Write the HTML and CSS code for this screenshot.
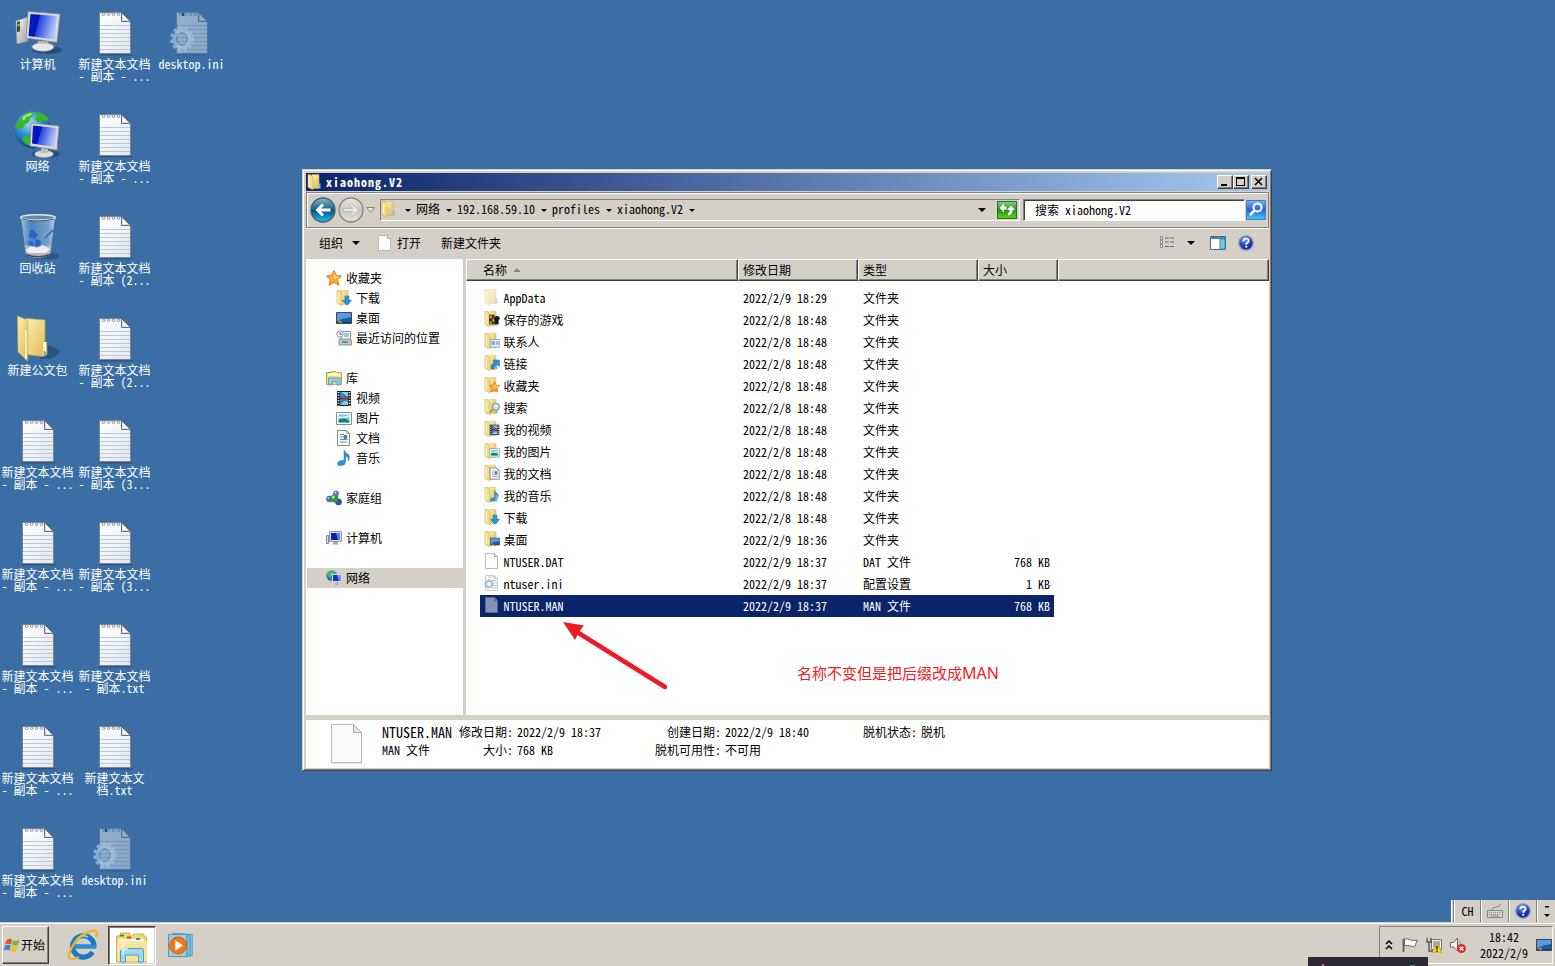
FILE: index.html
```
<!DOCTYPE html>
<html lang="zh-CN">
<head>
<meta charset="utf-8">
<title>xiaohong.V2</title>
<link rel="stylesheet" href="styles.css">
</head>
<body>
<svg width="0" height="0" class="defs">
<defs>
<linearGradient id="gPaper" x1="0" y1="0" x2="1" y2="1"><stop offset="0" stop-color="#fff"/><stop offset="1" stop-color="#e4e7ee"/></linearGradient>
<linearGradient id="gScreen" x1="0" y1="0" x2="1" y2=".25"><stop offset="0" stop-color="#0a1fae"/><stop offset=".38" stop-color="#0512c0"/><stop offset=".42" stop-color="#2745e0"/><stop offset="1" stop-color="#b4c6f8"/></linearGradient>
<linearGradient id="gFold" x1="0" y1="0" x2="1" y2="1"><stop offset="0" stop-color="#fbf0b4"/><stop offset="1" stop-color="#dfb94e"/></linearGradient>
<linearGradient id="gSilver" x1="0" y1="0" x2="1" y2="1"><stop offset="0" stop-color="#fafafa"/><stop offset="1" stop-color="#9c9c9c"/></linearGradient>
<radialGradient id="gGlobe" cx=".4" cy=".3" r=".7"><stop offset="0" stop-color="#9fe0ff"/><stop offset=".5" stop-color="#2b8fd0"/><stop offset="1" stop-color="#123f87"/></radialGradient>
<linearGradient id="gBack" x1="0" y1="0" x2="0" y2="1"><stop offset="0" stop-color="#8bb6ca"/><stop offset=".45" stop-color="#1b6795"/><stop offset=".5" stop-color="#074e80"/><stop offset="1" stop-color="#18c2f2"/></linearGradient>
<linearGradient id="gFwd" x1="0" y1="0" x2="0" y2="1"><stop offset="0" stop-color="#e8e7e3"/><stop offset=".5" stop-color="#c8c6bf"/><stop offset="1" stop-color="#e4e2dd"/></linearGradient>
<linearGradient id="gBlue" x1="0" y1="0" x2="0" y2="1"><stop offset="0" stop-color="#79b3f4"/><stop offset=".5" stop-color="#2b62dc"/><stop offset="1" stop-color="#49cdf8"/></linearGradient>
<linearGradient id="gGreen" x1="0" y1="0" x2="0" y2="1"><stop offset="0" stop-color="#8ccf82"/><stop offset=".5" stop-color="#23941f"/><stop offset="1" stop-color="#5fd31b"/></linearGradient>
<linearGradient id="gBin" x1="0" y1="0" x2="1" y2="0"><stop offset="0" stop-color="#c7ddf1" stop-opacity=".75"/><stop offset=".3" stop-color="#5e97d0" stop-opacity=".5"/><stop offset=".8" stop-color="#9cc5ea" stop-opacity=".6"/><stop offset="1" stop-color="#d6e8f8" stop-opacity=".8"/></linearGradient>
<radialGradient id="gOrb" cx=".4" cy=".25" r=".75"><stop offset="0" stop-color="#7f9cf4"/><stop offset=".6" stop-color="#1b3fc0"/><stop offset="1" stop-color="#0a1f86"/></radialGradient>

<symbol id="doc48" viewBox="0 0 48 48"><path d="M8 46h34v1.500H8z" fill="#1d3d66" opacity=".5"/><path d="M8.500 4.500h22l9 9v32h-31z" fill="url(#gPaper)" stroke="#7c838e"/><path d="M9 17.500h30M9 21.500h30M9 25.500h30M9 29.500h30M9 33.500h30M9 37.500h30M9 41.500h30" stroke="#b5cad9"/><path d="M30.500 4.500v9h9z" fill="#d8dce4" stroke="#6a707a"/><path d="M32 7v5h5" fill="#fff"/><g fill="none" stroke="#8a8f98"><circle cx="12.500" cy="6.200" r="1.300"/><circle cx="17.500" cy="6.200" r="1.300"/><circle cx="22.500" cy="6.200" r="1.300"/><circle cx="27.500" cy="6.200" r="1.300"/></g></symbol>
<symbol id="gear" viewBox="0 0 26 28"><ellipse cx="13" cy="14" rx="7.500" ry="8.500" fill="none" stroke="#9cc3e0" stroke-width="4"/><ellipse cx="13" cy="14" rx="10.500" ry="11.700" fill="none" stroke="#9cc3e0" stroke-width="2.600" stroke-dasharray="3.600 2.500"/><ellipse cx="13" cy="14" rx="5.200" ry="6.200" fill="none" stroke="#4f7fae"/></symbol>
<symbol id="ini48" viewBox="0 0 48 48"><g opacity=".45"><use href="#doc48" width="48" height="48"/></g><g opacity=".75"><use href="#gear" x="1" y="17" width="26" height="28"/></g><rect x="14" y="5" width="2" height="3" fill="#164f8e"/></symbol>
<symbol id="pc48" viewBox="0 0 48 48"><ellipse cx="33" cy="42" rx="15" ry="4" fill="#173b66" opacity=".6"/><path d="M2 13l12-4v24L3 36z" fill="url(#gSilver)" stroke="#999" stroke-width=".6"/><path d="M3 14l3-.8v10l-3 1z" fill="#444"/><circle cx="4.500" cy="17" r="1.200" fill="#4cf32c"/><path d="M24 33h10l1 6H23z" fill="#b8b8b8"/><ellipse cx="29" cy="39" rx="11" ry="4.200" fill="#e8e8e8" stroke="#969696" stroke-width=".6"/><path d="M14 3.500L46 6l-3 28.500L12 30z" fill="#dad9d5" stroke="#888" stroke-width=".8"/><path d="M16.500 6L43 8l-2.500 23.500L14.500 28z" fill="url(#gScreen)"/></symbol>
<symbol id="net48" viewBox="0 0 48 48"><ellipse cx="32" cy="44" rx="14" ry="4" fill="#173b66" opacity=".6"/><circle cx="19" cy="20" r="18.500" fill="url(#gGlobe)"/><path d="M6 9q7-8 14-7 0 4-4 6 1 5-5 6-1 6-6 5l-4-2q1-4 5-8zM24 2q9 2 11 9l-6-1-4 3-4-3zM8 27q6-3 9 2l1 7q-9-1-10-9z" fill="#38b52b"/><path d="M8 8q5-5 11-5l-3 3-4 1-2 4z" fill="#a8ef6b"/><ellipse cx="30" cy="44" rx="9.500" ry="3.600" fill="#ddd" stroke="#999" stroke-width=".6"/><path d="M27 38h7v5h-7z" fill="#bbb"/><path d="M17 13l28 3-2 24-27-4z" fill="#d9d9d5" stroke="#888" stroke-width=".8"/><path d="M19 15.500l23.500 2.500-1.700 19L18 33.500z" fill="url(#gScreen)"/></symbol>
<symbol id="bin48" viewBox="0 0 48 48"><ellipse cx="32" cy="44" rx="13" ry="3.500" fill="#173b66" opacity=".5"/><path d="M7 5h34l-5 38q-12 6-24 0z" fill="url(#gBin)"/><path d="M10.500 33q13 3 27 0l-1.500 10q-12 6-24 0z" fill="#b4b9bf"/><path d="M12 42.500q12 4.500 24 0" stroke="#4b4c4e" stroke-width="1.600" fill="none"/><path d="M12 38l5-4 6 2 6-3 7 4-4 4H14z" fill="#efefef"/><path d="M16 19l3-1 5 5-3 4-3-2-3 1zM22 27l5 2-1 5-5 1zM14 29l5 1 1 4-5-1z" fill="#1d5dce" opacity=".85"/><path d="M31 26l8-8" stroke="#286bb3" stroke-width="1.600"/><ellipse cx="24" cy="5.500" rx="17.300" ry="2.800" fill="#618bac" stroke="#e2e5e6" stroke-width="1.600"/><path d="M8 7q16 4 32 0" fill="none" stroke="#4b5258"/></symbol>
<symbol id="fold48" viewBox="0 0 48 48"><path d="M26 45q18 1 20-9L32 30z" fill="#173b66" opacity=".5"/><path d="M12 4.500l19 1.500v22l2 .500v12l-4 2-17-2z" fill="url(#gFold)" stroke="#c5a344" stroke-width=".6"/><path d="M3.500 2l10 4 .5 5-.5 36L4 38z" fill="url(#gFold)" stroke="#c9a849" stroke-width=".6"/><path d="M12 16v29" stroke="#fffbe0" stroke-width="1.500"/><path d="M29.500 29l2.500-1v11l-2.500 2z" fill="#fff"/><path d="M30 36v5l2-2z" fill="#2f94f0"/></symbol>

<symbol id="folder" viewBox="0 0 16 16"><path d="M5 .500h7v14H5z" fill="url(#gFold)" stroke="#d5b45c" stroke-width=".5"/><path d="M1 .500h2.500L6 3v12.700L1 13.500z" fill="#f2dc8a" stroke="#cfac50" stroke-width=".6"/><path d="M2.200 2v11" stroke="#fff8cf"/><path d="M12 9.500h1.500V15L12 14z" fill="#72bdf0"/></symbol>
<symbol id="page" viewBox="0 0 16 16"><path d="M1.500.500h9l3 3v12h-12z" fill="#fdfdfd" stroke="#bbb"/><path d="M10.500.500v3h3" fill="#e3e3e3" stroke="#aaa"/></symbol>
<symbol id="textpage" viewBox="0 0 16 16"><use href="#page" width="16" height="16"/><path d="M1.500.500h9l3 3v12h-12z" fill="none" stroke="#8c8c8c"/><path d="M4 4.500h4M4 7h7.500M4 9.500h7.500M4 12h7.500" stroke="#6f8bac"/><path d="M8 5h3v4H8z" fill="#278bd1"/></symbol>
<symbol id="pic" viewBox="0 0 16 16"><path d="M.5 2.500h15v12H.5z" fill="#fff" stroke="#858f99"/><path d="M2.500 4.500h11v8h-11z" fill="#73c5e8"/><path d="M2.500 10q4-4 11 1v1.500h-11z" fill="#198266"/><path d="M3 6q4 2 10-1v2q-5 2-10 1z" fill="#e2f5fc"/></symbol>
<symbol id="film" viewBox="0 0 16 16"><path d="M1 1h14v15H1z" fill="#1d2226"/><path d="M4 2h8v6H4zM4 9h8v6H4z" fill="#2c85bd"/><path d="M5 2l7 5V2zM4 15l5-5 3 2v3z" fill="#85c9eb"/><path d="M9 6l3 2-3 3-3-2z" fill="#b23b2b"/><path d="M2.500 2v14M13.500 2v14" stroke="#fff" stroke-width="1.500" stroke-dasharray="1.200 1.500"/></symbol>
<symbol id="note" viewBox="0 0 16 16"><path d="M8 0q1 3 4 4 3 3 0 7 1-4-2.500-5v6q0 3-4 3.500Q1 16 1.500 13q1-3 6.500-2.500z" fill="#2794df" stroke="#1973b6" stroke-width=".5"/></symbol>
<symbol id="down" viewBox="0 0 16 16"><path d="M5 1h6v7h4l-7 7.500L1 8h4z" fill="#2798e7" stroke="#0c65ae"/></symbol>
<symbol id="star" viewBox="0 0 16 16"><path d="M8 .5l2.300 5 5.200.5-4 3.600 1.300 5.700L8 12.200l-4.800 3.100 1.300-5.700L.5 6l5.200-.5z" fill="#ffb02e" stroke="#e66d19"/><path d="M8 2.500l1.500 4 4 .3-5.500 2z" fill="#ffe690"/></symbol>
<symbol id="screen" viewBox="0 0 16 16"><path d="M.5 2.500h15v11H.5z" fill="#175bab" stroke="#36485f"/><path d="M1 3h14v4Q7 8 1 11z" fill="#5c98dc"/><path d="M1 12.500h14" stroke="#203b5b"/><circle cx="3.500" cy="11.500" r="1.300" fill="#f5702c"/><circle cx="5" cy="12.500" r="1" fill="#61cd38"/></symbol>
<symbol id="recent" viewBox="0 0 16 16"><path d="M5.500 1.500h9v10h-9z" fill="#eef5fb" stroke="#8996a3"/><path d="M8 4h5M8 6h5" stroke="#4ea3d2"/><path d="M3 9h12l1 6H3z" fill="#bfc5ca" stroke="#8f969c"/><path d="M6 11h6v2H6z" fill="#3aa4b3"/><circle cx="4" cy="4" r="3.200" fill="#fff" stroke="#8c959c"/><path d="M4 2v2.300h2" fill="none" stroke="#667"/></symbol>
<symbol id="library" viewBox="0 0 16 16"><path d="M.5 2.500h4l1-1h4l1 1h5v12H.5z" fill="#f0d77c" stroke="#c8a74c"/><path d="M2 3h12v3H2z" fill="#fff5c8"/><path d="M2 2.500h3" stroke="#49ad38"/><path d="M2.500 15V9q0-1 1-1h9.500q1 0 1 1v6h-3v-3.500H6V15z" fill="#8bd3ef" stroke="#4797bd" stroke-width=".8"/></symbol>
<symbol id="home" viewBox="0 0 16 16"><circle cx="10" cy="3.500" r="3" fill="#5976da"/><circle cx="3.500" cy="9" r="3.300" fill="#5266c9"/><circle cx="12.500" cy="12" r="3.300" fill="#334bad"/><circle cx="8.500" cy="8.500" r="4" fill="#2e9b32"/><circle cx="7.300" cy="7" r="1.600" fill="#a1e594"/><circle cx="2.500" cy="8" r="1" fill="#cdd9ff"/><circle cx="9.500" cy="2.500" r="1" fill="#d4deff"/></symbol>
<symbol id="pc" viewBox="0 0 16 16"><path d="M.5 5.500h2v8h-2z" fill="#ddd" stroke="#888"/><path d="M3.500 1.500h12v10h-12z" fill="#ddd" stroke="#999"/><path d="M5 3h9v7H5z" fill="#0d1fb3"/><path d="M10 3h4v7h-2z" fill="#5b7cf0"/><path d="M7.500 12h4l1 2.500h-6z" fill="#aaa"/></symbol>
<symbol id="net" viewBox="0 0 16 16"><circle cx="5.500" cy="5.500" r="5.200" fill="url(#gGlobe)"/><path d="M2 3q2-3 5-2L5 4 4 7 1 6zM8 1q3 1 3 4L8 4zM3 8l3 1v2z" fill="#4abf35"/><path d="M6.500 4.500h9v7h-9z" fill="#1635be" stroke="#d7dade"/><path d="M11 5h4v6h-2z" fill="#6d90f3"/><path d="M9.500 12h3v3h-3z" fill="#aab"/></symbol>
<symbol id="card" viewBox="0 0 16 16"><path d="M.5 2.500h15v12H.5z" fill="#f1f7fb" stroke="#68849b"/><path d="M2.500 5h5v6h-5z" fill="#5fa9de"/><path d="M9 6.500h5M9 9.500h5" stroke="#5378a0" stroke-width="1.500"/></symbol>
<symbol id="link" viewBox="0 0 16 16"><path d="M2 15Q1 7 7 5L5 1h10v10l-3-3Q7 9 6 15z" fill="#2b91de" stroke="#0c66ac"/></symbol>
<symbol id="lens" viewBox="0 0 16 16"><path d="M6 9l-5 6" stroke="#c98b40" stroke-width="2.500"/><circle cx="10" cy="6" r="4.800" fill="#d6ebf5" stroke="#88a0b1" stroke-width="2"/></symbol>
<symbol id="chess" viewBox="0 0 16 16"><path d="M0 1h8v14H0z" fill="#423323"/><path d="M1 2h3v4H1zM5 7h3v4H5zM1 11h3v3H1z" fill="#c9ad60"/><path d="M10 3q5-1 6 4l-2 2v6H8V9q-2-2 2-6z" fill="#161616"/></symbol>

<symbol id="back" viewBox="0 0 26 26"><circle cx="13" cy="13" r="12" fill="url(#gBack)" stroke="#505c66" stroke-width="1.400"/><path d="M5.500 13L12 6.500l2 2-3 3h9.500v3H11l3 3-2 2z" fill="#fff"/></symbol>
<symbol id="fwd" viewBox="0 0 26 26"><circle cx="13" cy="13" r="12" fill="url(#gFwd)" stroke="#85847f" stroke-width="1.300"/><path d="M20.500 13L14 6.500l-2 2 3 3H5.500v3H15l-3 3 2 2z" fill="#e8e6e1" stroke="#b4b2ab" stroke-width=".7"/></symbol>
<symbol id="help" viewBox="0 0 18 18"><circle cx="9" cy="9" r="8" fill="url(#gOrb)" stroke="#8793a8" stroke-width="1.500"/><path d="M6 7q0-3 3-3t3 2.500q0 1.500-1.500 2.300Q9.300 9.500 9.300 11" fill="none" stroke="#fff" stroke-width="2"/><path d="M8.200 12.200h2.200v2H8.200z" fill="#fff"/></symbol>
<symbol id="tri" viewBox="0 0 8 4"><path d="M0 0h8L4 4z" fill="#000"/></symbol>
<symbol id="flag4" viewBox="0 0 16 16"><path d="M2.500 3q3-2 5.500-.5L7 7.500Q4.500 6 1 7.500z" fill="#e8502c"/><path d="M8.800 3Q12 4.500 15.500 3L14 8q-3 1.500-6-.2z" fill="#7cb83a"/><path d="M1 8.500q3-1.500 5.800 0L5.500 13.500q-2.500-1.500-5.500 0z" fill="#3a80d2"/><path d="M7.700 8.800q3 1.700 6 .3l-1.500 5q-3 1.400-6-.3z" fill="#f7bd28"/></symbol>
</defs>
</svg>

<main class="screen">
  <section class="desktop">
    <div class="shortcut"><svg><use href="#pc48"/></svg><span>计算机</span></div>
    <div class="shortcut"><svg><use href="#net48"/></svg><span>网络</span></div>
    <div class="shortcut"><svg><use href="#bin48"/></svg><span>回收站</span></div>
    <div class="shortcut"><svg><use href="#fold48"/></svg><span>新建公文包</span></div>
    <div class="shortcut"><svg><use href="#doc48"/></svg><span>新建文本文档<br>- 副本 - ...</span></div>
    <div class="shortcut"><svg><use href="#doc48"/></svg><span>新建文本文档<br>- 副本 - ...</span></div>
    <div class="shortcut"><svg><use href="#doc48"/></svg><span>新建文本文档<br>- 副本 - ...</span></div>
    <div class="shortcut"><svg><use href="#doc48"/></svg><span>新建文本文档<br>- 副本 - ...</span></div>
    <div class="shortcut"><svg><use href="#doc48"/></svg><span>新建文本文档<br>- 副本 - ...</span></div>
    <div class="shortcut"><svg><use href="#doc48"/></svg><span>新建文本文档<br>- 副本 - ...</span></div>
    <div class="shortcut"><svg><use href="#doc48"/></svg><span>新建文本文档<br>- 副本 - ...</span></div>
    <div class="shortcut"><svg><use href="#doc48"/></svg><span>新建文本文档<br>- 副本 (2...</span></div>
    <div class="shortcut"><svg><use href="#doc48"/></svg><span>新建文本文档<br>- 副本 (2...</span></div>
    <div class="shortcut"><svg><use href="#doc48"/></svg><span>新建文本文档<br>- 副本 (3...</span></div>
    <div class="shortcut"><svg><use href="#doc48"/></svg><span>新建文本文档<br>- 副本 (3...</span></div>
    <div class="shortcut"><svg><use href="#doc48"/></svg><span>新建文本文档<br>- 副本.txt</span></div>
    <div class="shortcut"><svg><use href="#doc48"/></svg><span>新建文本文<br>档.txt</span></div>
    <div class="shortcut"><svg><use href="#ini48"/></svg><span>desktop.ini</span></div>
    <div class="shortcut"><svg><use href="#ini48"/></svg><span>desktop.ini</span></div>
  </section>

  <section class="window">
    <header class="titlebar">
      <svg class="i16"><use href="#folder"/></svg><span class="title">xiaohong.V2</span>
      <span class="winbtn"><svg viewBox="0 0 13 11"><path d="M3 8h6v2H3z"/></svg></span>
      <span class="winbtn"><svg viewBox="0 0 13 11"><path d="M2 1h9v9H2zM3 3v6h7V3z" fill-rule="evenodd"/></svg></span>
      <span class="winbtn close"><svg viewBox="0 0 13 11"><path d="M3 2l7 7M10 2L3 9" stroke="#000" stroke-width="1.600"/></svg></span>
    </header>
    <div class="navbar">
      <div class="travel"><svg class="round"><use href="#back"/></svg><svg class="round"><use href="#fwd"/></svg><svg class="hist" viewBox="0 0 9 6"><path d="M.5.500h8L4.500 5z" fill="#eee" stroke="#888"/></svg></div>
      <div class="address">
        <svg class="i16"><use href="#folder"/></svg>
        <svg class="tri first"><use href="#tri"/></svg><span>网络</span>
        <svg class="tri"><use href="#tri"/></svg><span>192.168.59.10</span>
        <svg class="tri"><use href="#tri"/></svg><span>profiles</span>
        <svg class="tri"><use href="#tri"/></svg><span>xiaohong.V2</span>
        <svg class="tri"><use href="#tri"/></svg>
        <svg class="tri drop"><use href="#tri"/></svg>
        <svg class="refresh" viewBox="0 0 20 18"><path d="M.5.500h19v17H.5z" fill="url(#gGreen)" stroke="#23751f"/><path d="M2.500 7L7 2.500V5.500h2.500V8.500H7v3zM2.500 7" fill="#fff"/><path d="M10 9l4-4.500L18 9h-2.500q0 5-4.500 5.500v-2q1.800-.5 1.800-3.500z" fill="#fff"/></svg>
      </div>
      <div class="search">搜索 xiaohong.V2</div>
      <svg class="go" viewBox="0 0 20 20"><path d="M.5.500h19v19H.5z" fill="url(#gBlue)" stroke="#3a7bd2"/><circle cx="11.500" cy="7.500" r="4" fill="none" stroke="#fff" stroke-width="2"/><path d="M8.500 10.500L4 15" stroke="#fff" stroke-width="2.500"/></svg>
    </div>
    <div class="toolbar">
      <span>组织</span><svg class="tri big"><use href="#tri"/></svg>
      <svg class="i16 open"><use href="#page"/></svg><span>打开</span><span class="newf">新建文件夹</span>
      <svg class="view" viewBox="0 0 16 13"><path d="M1.500.500h2v3h-2zM1.500 4.500h2v3h-2zM1.500 8.500h2v3h-2z" fill="#fff" stroke="#7b8795"/><path d="M6 2h4M11 2h4M6 6h4M11 6h4M6 10.500h4M11 10.500h4" stroke="#5b6f87"/></svg>
      <svg class="tri big viewdrop"><use href="#tri"/></svg>
      <svg class="pane" viewBox="0 0 16 14"><path d="M.5.500h15v13H.5z" fill="#fff" stroke="#41688f"/><path d="M1 1h14v2H1z" fill="#4786bc"/><path d="M10 3h5v10h-5z" fill="#74cddd" stroke="#3d879f"/></svg>
      <svg class="helpb"><use href="#help"/></svg>
    </div>
    <div class="body">
      <nav class="tree">
        <div class="node"><svg class="i16"><use href="#star"/></svg>收藏夹</div>
        <div class="node sub"><svg class="i16" viewBox="0 0 16 16"><use href="#folder"/><use href="#down" x="6" y="5" width="10" height="11"/></svg>下载</div>
        <div class="node sub"><svg class="i16"><use href="#screen"/></svg>桌面</div>
        <div class="node sub gap"><svg class="i16"><use href="#recent"/></svg>最近访问的位置</div>
        <div class="node"><svg class="i16"><use href="#library"/></svg>库</div>
        <div class="node sub"><svg class="i16"><use href="#film"/></svg>视频</div>
        <div class="node sub"><svg class="i16"><use href="#pic"/></svg>图片</div>
        <div class="node sub"><svg class="i16"><use href="#textpage"/></svg>文档</div>
        <div class="node sub gap"><svg class="i16"><use href="#note"/></svg>音乐</div>
        <div class="node gap"><svg class="i16"><use href="#home"/></svg>家庭组</div>
        <div class="node gap"><svg class="i16"><use href="#pc"/></svg>计算机</div>
        <div class="node on"><svg class="i16"><use href="#net"/></svg>网络</div>
      </nav>
      <div class="list">
        <div class="head"><span class="h1">名称<svg viewBox="0 0 8 4"><path d="M0 4h8L4 0z" fill="#858585"/></svg></span><span>修改日期</span><span>类型</span><span>大小</span><span></span></div>
        <div class="rows">
          <div class="row"><svg class="i16 dim"><use href="#folder"/></svg><b>AppData</b><i>2022/2/9 18:29</i><i>文件夹</i><em></em></div>
          <div class="row"><svg class="i16" viewBox="0 0 16 16"><use href="#folder"/><use href="#chess" x="5" y="3" width="11" height="11"/></svg><b>保存的游戏</b><i>2022/2/8 18:48</i><i>文件夹</i><em></em></div>
          <div class="row"><svg class="i16" viewBox="0 0 16 16"><use href="#folder"/><use href="#card" x="6" y="5" width="10" height="10"/></svg><b>联系人</b><i>2022/2/8 18:48</i><i>文件夹</i><em></em></div>
          <div class="row"><svg class="i16" viewBox="0 0 16 16"><use href="#folder"/><use href="#link" x="6" y="4" width="10" height="11"/></svg><b>链接</b><i>2022/2/8 18:48</i><i>文件夹</i><em></em></div>
          <div class="row"><svg class="i16" viewBox="0 0 16 16"><use href="#folder"/><use href="#star" x="5" y="4" width="11" height="12"/></svg><b>收藏夹</b><i>2022/2/8 18:48</i><i>文件夹</i><em></em></div>
          <div class="row"><svg class="i16" viewBox="0 0 16 16"><use href="#folder"/><use href="#lens" x="5" y="3" width="11" height="12"/></svg><b>搜索</b><i>2022/2/8 18:48</i><i>文件夹</i><em></em></div>
          <div class="row"><svg class="i16" viewBox="0 0 16 16"><use href="#folder"/><use href="#film" x="5" y="2" width="11" height="13"/></svg><b>我的视频</b><i>2022/2/8 18:48</i><i>文件夹</i><em></em></div>
          <div class="row"><svg class="i16" viewBox="0 0 16 16"><use href="#folder"/><use href="#pic" x="5" y="4" width="11" height="11"/></svg><b>我的图片</b><i>2022/2/8 18:48</i><i>文件夹</i><em></em></div>
          <div class="row"><svg class="i16" viewBox="0 0 16 16"><use href="#folder"/><use href="#textpage" x="5" y="2" width="12" height="13"/></svg><b>我的文档</b><i>2022/2/8 18:48</i><i>文件夹</i><em></em></div>
          <div class="row"><svg class="i16" viewBox="0 0 16 16"><use href="#folder"/><use href="#note" x="5" y="3" width="11" height="12"/></svg><b>我的音乐</b><i>2022/2/8 18:48</i><i>文件夹</i><em></em></div>
          <div class="row"><svg class="i16" viewBox="0 0 16 16"><use href="#folder"/><use href="#down" x="6" y="5" width="10" height="11"/></svg><b>下载</b><i>2022/2/8 18:48</i><i>文件夹</i><em></em></div>
          <div class="row"><svg class="i16" viewBox="0 0 16 16"><use href="#folder"/><use href="#screen" x="6" y="5" width="10" height="11"/></svg><b>桌面</b><i>2022/2/9 18:36</i><i>文件夹</i><em></em></div>
          <div class="row"><svg class="i16"><use href="#page"/></svg><b>NTUSER.DAT</b><i>2022/2/9 18:37</i><i>DAT 文件</i><em>768 KB</em></div>
          <div class="row"><svg class="i16" viewBox="0 0 16 16"><g opacity=".7"><use href="#page"/><path d="M7 5.500h5M8 8h5M8 10.500h5M8 13h5M4 2h6" stroke="#a5b5c2"/><circle cx="5" cy="9" r="3" fill="none" stroke="#8aacc4" stroke-width="2"/><circle cx="5" cy="9" r="4.500" fill="none" stroke="#8aacc4" stroke-dasharray="1.500 1.300"/></g></svg><b>ntuser.ini</b><i>2022/2/9 18:37</i><i>配置设置</i><em>1 KB</em></div>
          <div class="row sel"><svg class="i16" viewBox="0 0 16 16"><path d="M1.500.500h9l3 3v12h-12z" fill="#8490b4" stroke="#566593"/><path d="M10.500.500v3h3" fill="#6875a0" stroke="#566593"/></svg><b>NTUSER.MAN</b><i>2022/2/9 18:37</i><i>MAN 文件</i><em>768 KB</em></div>
        </div>
      </div>
    </div>
    <footer class="details">
      <svg class="bigpage" viewBox="0 0 32 40"><path d="M1.500 1.500h22l7 7v31h-29z" fill="#aaa" opacity=".6"/><path d="M.5.500h22l8 8v30H.5z" fill="#f9f9f9" stroke="#bcbcbc"/><path d="M22.500.500v8h8z" fill="#e7e7e7" stroke="#aaa"/></svg>
      <div class="facts">
        <span class="fname">NTUSER.MAN</span><span class="lab">修改日期:</span><span>2022/2/9 18:37</span><span class="lab">创建日期:</span><span>2022/2/9 18:40</span><span class="lab">脱机状态:</span><span>脱机</span>
        <span>MAN 文件</span><span class="lab">大小:</span><span>768 KB</span><span class="lab">脱机可用性:</span><span>不可用</span>
      </div>
    </footer>
  </section>

  <svg class="arrow" viewBox="0 0 110 75"><path d="M16 12L104 67" stroke="#ed1c24" stroke-width="4.500" stroke-linecap="round"/><path d="M2 2L23 5.500 18 12 14 20z" fill="#ed1c24"/></svg>
  <div class="remark">名称不变但是把后缀改成<span>MAN</span></div>

  <div class="langbar">
    <span class="grip"></span><span class="lang">CH</span>
    <span><svg width="16" height="16" viewBox="0 0 16 16"><path d="M.5 7.500h15v7H.5z" fill="#d8d5ce" stroke="#888"/><path d="M2 9.500h12M2 11.500h12" stroke="#888" stroke-dasharray="1 1"/><path d="M4 13h8M5 7q0-3 4-3t5-3" stroke="#888" fill="none"/></svg></span>
    <span><svg width="16" height="16"><use href="#help"/></svg></span>
    <span class="opts"><svg width="6" height="12" viewBox="0 0 6 12"><path d="M1 1h4v1.500H1zM0 9h6l-3 3z"/></svg></span>
  </div>

  <footer class="taskbar">
    <div class="start"><svg class="i16"><use href="#flag4"/></svg>开始</div>
    <svg class="ie" viewBox="0 0 32 32"><path d="M27 18.500a10.700 10.700 0 1 0-1.500 4.500" fill="none" stroke="#1c78c4" stroke-width="5.200"/><path d="M8 17.500h21" stroke="#2a8bd6" stroke-width="4.500"/><path d="M9 11q5-6 12-3" stroke="#7cc8f3" stroke-width="1.800" fill="none"/><path d="M29 8Q32 0 24 2 10 7 4 20-1 30 5 30q3 0 7-2" fill="none" stroke="#efb42e" stroke-width="2.400"/></svg>
    <div class="task"><svg viewBox="0 0 34 32"><path d="M1.500 5h3l1-3h9l1 3h2l1-2h10l1 3h2v25h-30z" fill="#f1d77c" stroke="#cfae52"/><path d="M4 8h25v5H4z" fill="#fff7d2"/><path d="M2 10h30v20H2z" fill="#f7e6a0" opacity=".85"/><path d="M5 4.500h4" stroke="#27a52b" stroke-width="2"/><path d="M12 6.500h4" stroke="#d3392d" stroke-width="2"/><path d="M21 8h4" stroke="#258bd7" stroke-width="2"/><path d="M5.500 31V19.500q0-2 2-2h19q2 0 2 2V31h-5v-7h-13v7z" fill="#9bdaf1" stroke="#4aa0ca"/><path d="M8 12v12M3 18h10" stroke="#fff"/></svg></div>
    <svg class="wmp" viewBox="0 0 30 28"><path d="M5 1.500l20 1v22l-20 1z" fill="#9fd1ea" stroke="#4f99c0"/><path d="M3 2.500l20 .500v22H3z" fill="#79b9dc" stroke="#4f99c0"/><path d="M.5 2.500h19v23H.5z" fill="#9dcce5" stroke="#4b91b6"/><circle cx="10.500" cy="14" r="8.800" fill="#f07818" stroke="#db560d"/><path d="M7.500 8.500l8 5.500-8 5.500z" fill="#fff"/></svg>
    <div class="tray">
      <svg class="chev" viewBox="0 0 8 10"><path d="M1 4l3-3 3 3M1 9l3-3 3 3" fill="none" stroke="#000" stroke-width="1.500"/></svg>
      <svg class="i16" viewBox="0 0 16 16"><path d="M1.500 15V1.500" stroke="#666" stroke-width="2"/><path d="M2.500 2q3-1 6 1 3 1 7 0-2 3-2 6-3 1-5 0-3-1-6 0z" fill="#fff" stroke="#666"/></svg>
      <svg class="i16" viewBox="0 0 16 16"><path d="M5.500 2.500h10v10h-10z" fill="#eee" stroke="#777"/><path d="M7 4h7v6H7z" fill="#aaa"/><path d="M1 1v4h4V1M3 5v9h4" fill="none" stroke="#555" stroke-width="1.400"/><path d="M11 6l5 10H6z" fill="#ffd91c" stroke="#b38d00" stroke-width=".7"/><path d="M11 9v3.500M11 13.500V15" stroke="#000" stroke-width="1.300"/></svg>
      <svg class="i16" viewBox="0 0 16 16"><path d="M.5 5.500h3l4-4.500v13l-4-4h-3z" fill="#eee" stroke="#666"/><path d="M9.500 4q2 3 0 6" fill="none" stroke="#888"/><circle cx="11.500" cy="11.500" r="4.500" fill="#e22a23"/><path d="M9.700 9.700l3.600 3.600M13.300 9.700l-3.600 3.600" stroke="#fff" stroke-width="1.500"/></svg>
      <div class="clock">18:42<br>2022/2/9</div>
      <svg class="i16"><use href="#screen"/></svg>
    </div>
  </footer>
  <div class="popup"><svg width="120" height="9"><path d="M14 7h2v2h-2z" fill="#c96070"/><path d="M102 8h5v1h-5z" fill="#3c8795"/></svg></div>
</main>
</body>
</html>
```
FILE: styles.css
```
* { box-sizing: border-box; }
body { margin: 0; overflow: hidden; font: 12px/12px "Noto Sans CJK SC", sans-serif; font-feature-settings: "hwid" 1, "liga" 0; color: #000; }
svg { display: block; flex: none; }
.defs { position: absolute; }
.screen { position: relative; width: 1555px; height: 966px; background: #3a6ea5; display: flex; flex-direction: column; overflow: hidden; }
.i16 { width: 16px; height: 16px; }
b, i, em { font-weight: normal; font-style: normal; }

.desktop { height: 922px; display: grid; grid-auto-flow: column; grid-template-rows: repeat(9, 102px); grid-auto-columns: 77px; padding-top: 8px; margin-left: -1px; justify-content: start; }
.shortcut { display: flex; flex-direction: column; align-items: center; color: #fff; text-align: center; }
.shortcut svg { width: 48px; height: 48px; margin-bottom: 2px; }
.shortcut span { white-space: nowrap; }

.window { position: absolute; left: 302px; top: 169px; width: 970px; height: 602px; background: #d4d0c8; border: 1px solid; border-color: #d4d0c8 #404040 #404040 #d4d0c8; box-shadow: inset 1px 1px #fff, inset -1px -1px #808080; padding: 3px 2px 2px 3px; display: flex; flex-direction: column; }
.titlebar { height: 18px; background: linear-gradient(90deg, #0a246a, #a6caf0); display: flex; align-items: center; padding: 0 2px 0 1px; }
.title { color: #fff; font-weight: bold; letter-spacing: 1px; margin-left: 3px; flex: 1; }
.winbtn { width: 16px; height: 14px; background: #d4d0c8; border: 1px solid; border-color: #fff #404040 #404040 #fff; box-shadow: inset -1px -1px #808080; }
.winbtn svg { width: 13px; height: 11px; }
.close { margin-left: 2px; }
.navbar { margin-top: 1px; height: 36px; border: 1px solid #808080; box-shadow: inset 1px 1px #fff, 0 1px #fff; display: flex; align-items: center; padding: 0 0 0 3px; }
.travel { width: 70px; display: flex; align-items: center; }
.round { width: 26px; height: 26px; margin-right: 2px; }
.hist { width: 9px; height: 6px; }
.address { width: 640px; height: 22px; border: 1px solid; border-color: #808080 #fff #fff #808080; display: flex; align-items: center; padding-right: 2px; }
.address span { padding-bottom: 3px; }
.address .i16 { margin-top: -2px; }
.tri { width: 6px; height: 3px; margin: 0 5px 0 6px; }
.tri.first { margin-left: 8px; }
.tri.drop { width: 8px; height: 4px; margin-left: auto; margin-right: 11px; }
.refresh { width: 20px; height: 18px; }
.search { margin-left: 3px; width: 222px; height: 22px; border: 1px solid; border-color: #808080 #fff #fff #808080; box-shadow: inset 1px 1px #404040; background: #fff; padding: 4px 0 0 11px; }
.go { width: 20px; height: 20px; margin-left: 1px; }
.toolbar { height: 31px; display: flex; align-items: center; padding: 0 15px 2px 13px; }
.tri.big { width: 8px; height: 4px; margin: 0 0 0 9px; }
.open { margin: 0 4px 0 17px; }
.newf { margin-left: 20px; flex: 1; }
.view { width: 16px; height: 13px; }
.tri.viewdrop { margin-left: 12px; }
.pane { width: 16px; height: 14px; margin-left: 15px; }
.helpb { width: 16px; height: 16px; margin-left: 12px; }

.body { height: 456px; display: flex; gap: 3px; }
.tree { width: 157px; background: #fff; padding: 9px 0 0 1px; }
.node { height: 20px; display: flex; align-items: center; gap: 4px; padding-left: 19px; }
.node.sub { padding-left: 29px; }
.node.gap { margin-bottom: 20px; }
.node.on { background: #d4d0c8; }
.list { flex: 1; background: #fff; }
.head { height: 22px; display: grid; grid-template-columns: 272px 120px 120px 80px 1fr; background: #d4d0c8; }
.head span { display: flex; align-items: center; padding-left: 4px; border: 1px solid; border-color: #fff #404040 #404040 #fff; box-shadow: inset -1px -1px #808080; }
.head .h1 { padding-left: 16px; gap: 6px; }
.h1 svg { width: 8px; height: 4px; }
.rows { padding: 6px 0 0 14px; }
.row { width: 574px; height: 22px; display: grid; grid-template-columns: 23.5px 239.5px 120px 121px 66px; align-items: center; }
.row svg { margin-left: 4px; margin-top: -2px; }
.row em { text-align: right; }
.dim { opacity: .5; }
.sel { background: #0a246a; color: #fff; }

.details { margin-top: 5px; height: 48px; background: #fff; display: flex; padding: 4px 0 0 25px; }
.bigpage { width: 32px; height: 40px; margin-right: 19px; }
.facts { display: grid; grid-template-columns: 76px 59px 137px 71px 125px 71px 60px; grid-auto-rows: 18px; align-items: center; height: 36px; margin-top: -1px; white-space: nowrap; }
.fname { font-size: 14px; }
.lab { text-align: right; padding-right: 4px; }

.arrow { position: absolute; left: 561px; top: 620px; width: 110px; height: 75px; }
.remark { position: absolute; left: 797px; top: 663px; font-size: 15px; line-height: 20px; color: #ed1c24; font-feature-settings: normal; white-space: nowrap; }
.remark span { font-family: "Noto Sans", sans-serif; font-size: 16px; }

.langbar { position: absolute; left: 1451px; top: 900px; width: 104px; height: 22px; background: #d4d0c8; display: flex; }
.langbar span { width: 28px; display: flex; align-items: center; justify-content: center; border-left: 1px solid #fff; border-right: 1px solid #808080; }
.langbar .grip { width: 3px; }
.langbar .lang { width: 27px; }
.langbar .opts { width: 18px; border-right: 0; }

.taskbar { height: 44px; background: #d4d0c8; border-top: 1px solid #d4d0c8; box-shadow: inset 0 1px #fff; display: flex; align-items: center; padding: 1px 2px 0; }
.start { width: 47px; height: 38px; border: 1px solid; border-color: #fff #404040 #404040 #fff; box-shadow: inset -1px -1px #808080; display: flex; align-items: center; padding-left: 1px; gap: 1px; white-space: nowrap; }
.ie { width: 32px; height: 32px; margin: 0 9px 0 18px; }
.task { width: 48px; height: 39px; background: #fff; border: 1px solid; border-color: #404040 #fff #fff #404040; box-shadow: inset 1px 1px #808080, inset -1px -1px #d4d0c8; padding: 4px 0 0 6px; }
.task svg { width: 34px; height: 32px; }
.wmp { width: 29px; height: 27px; margin-left: 12px; }
.tray { margin-left: auto; width: 174px; height: 38px; border: 1px solid; border-color: #808080 #fff #fff #808080; display: flex; align-items: center; }
.tray .i16 { margin-right: 8px; }
.tray .chev { width: 8px; height: 10px; margin: 0 9px 0 5px; }
.clock { width: 60px; line-height: 16px; text-align: center; margin: 0 4px 0 2px; }
.tray .i16:last-child { margin: 0; }
.popup { position: absolute; left: 1308px; top: 957px; width: 120px; height: 9px; background: #2b2935; }
```
